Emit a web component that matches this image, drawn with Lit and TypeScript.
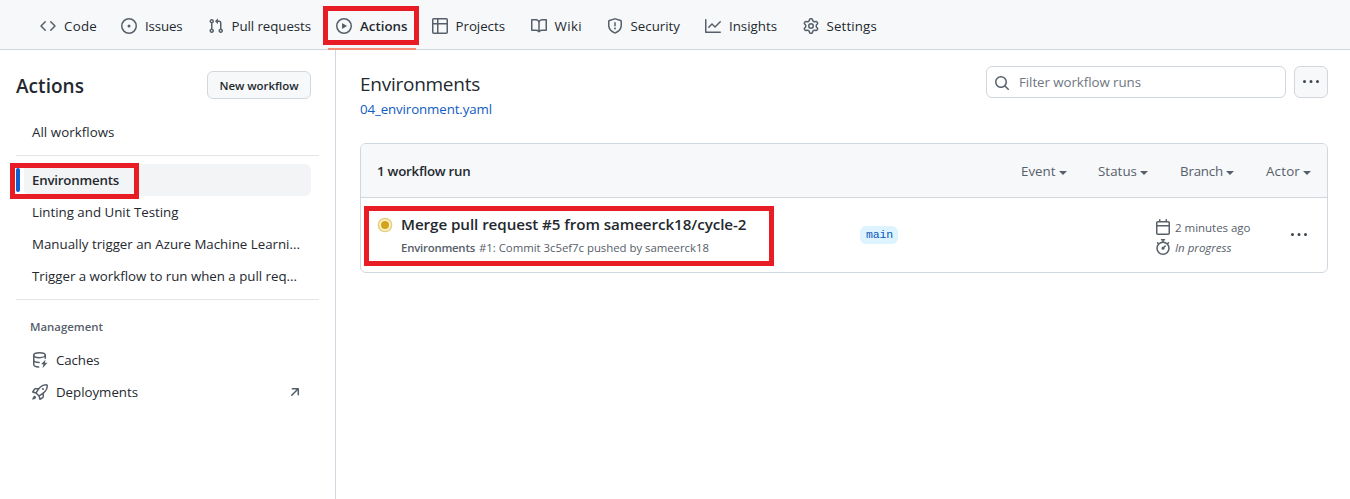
import { LitElement, html, css, svg } from "lit";
import { customElement, property } from "lit/decorators.js";

const FONT = css`"Open Sans", "Noto Sans", sans-serif`;

const ICONS: Record<string, string> = {
  code: "m11.28 3.22 4.25 4.25a.75.75 0 0 1 0 1.06l-4.25 4.25a.749.749 0 0 1-1.275-.326.749.749 0 0 1 .215-.734L13.94 8l-3.72-3.72a.749.749 0 0 1 .326-1.275.749.749 0 0 1 .734.215Zm-6.56 0a.751.751 0 0 1 1.042.018.751.751 0 0 1 .018 1.042L2.06 8l3.72 3.72a.749.749 0 0 1-.326 1.275.749.749 0 0 1-.734-.215L.47 8.53a.75.75 0 0 1 0-1.06Z",
  issue: "M8 9.5a1.5 1.5 0 1 0 0-3 1.5 1.5 0 0 0 0 3ZM8 0a8 8 0 1 1 0 16A8 8 0 0 1 8 0ZM1.5 8a6.5 6.5 0 1 0 13 0 6.5 6.5 0 0 0-13 0Z",
  pull: "M1.5 3.25a2.25 2.25 0 1 1 3 2.122v5.256a2.251 2.251 0 1 1-1.5 0V5.372A2.25 2.25 0 0 1 1.5 3.25Zm5.677-.177L9.573.677A.25.25 0 0 1 10 .854V2.5h1A2.5 2.5 0 0 1 13.5 5v5.628a2.251 2.251 0 1 1-1.5 0V5a1 1 0 0 0-1-1h-1v1.646a.25.25 0 0 1-.427.177L7.177 3.427a.25.25 0 0 1 0-.354ZM3.75 2.5a.75.75 0 1 0 0 1.5.75.75 0 0 0 0-1.5Zm0 9.5a.75.75 0 1 0 0 1.5.75.75 0 0 0 0-1.5Zm8.25.75a.75.75 0 1 0 1.5 0 .75.75 0 0 0-1.5 0Z",
  play: "M8 0a8 8 0 1 1 0 16A8 8 0 0 1 8 0ZM1.5 8a6.5 6.5 0 1 0 13 0 6.5 6.5 0 0 0-13 0Zm4.879-2.773 4.264 2.559a.25.25 0 0 1 0 .428l-4.264 2.559A.25.25 0 0 1 6 10.559V5.442a.25.25 0 0 1 .379-.215Z",
  table: "M0 1.75C0 .784.784 0 1.75 0h12.5C15.216 0 16 .784 16 1.75v12.5A1.75 1.75 0 0 1 14.25 16H1.75A1.75 1.75 0 0 1 0 14.25ZM6.5 6.5v8h7.75a.25.25 0 0 0 .25-.25V6.5Zm8-1.5V1.75a.25.25 0 0 0-.25-.25H6.5V5Zm-13 1.5v7.75c0 .138.112.25.25.25H5v-8ZM5 5V1.5H1.75a.25.25 0 0 0-.25.25V5Z",
  book: "M0 1.75A.75.75 0 0 1 .75 1h4.253c1.227 0 2.317.59 3 1.501A3.743 3.743 0 0 1 11.006 1h4.245a.75.75 0 0 1 .75.75v10.5a.75.75 0 0 1-.75.75h-4.507a2.25 2.25 0 0 0-1.591.659l-.622.621a.75.75 0 0 1-1.06 0l-.622-.621A2.25 2.25 0 0 0 5.258 13H.75a.75.75 0 0 1-.75-.75Zm7.251 10.324.004-5.073-.002-2.253A2.25 2.25 0 0 0 5.003 2.5H1.5v9h3.757a3.75 3.75 0 0 1 1.994.574ZM8.755 4.75l-.004 7.322a3.752 3.752 0 0 1 1.992-.572H14.5v-9h-3.495a2.25 2.25 0 0 0-2.25 2.25Z",
  shield: "M7.467.133a1.748 1.748 0 0 1 1.066 0l5.25 1.68A1.75 1.75 0 0 1 15 3.48V7c0 1.566-.32 3.182-1.303 4.682-.983 1.498-2.585 2.813-5.032 3.855a1.697 1.697 0 0 1-1.33 0c-2.447-1.042-4.049-2.357-5.032-3.855C1.32 10.182 1 8.566 1 7V3.48a1.75 1.75 0 0 1 1.217-1.667Zm.61 1.429a.25.25 0 0 0-.153 0l-5.25 1.68a.25.25 0 0 0-.174.238V7c0 1.358.275 2.666 1.057 3.86.784 1.194 2.121 2.34 4.366 3.297a.196.196 0 0 0 .154 0c2.245-.956 3.582-2.104 4.366-3.298C13.225 9.666 13.5 8.36 13.5 7V3.48a.251.251 0 0 0-.174-.237l-5.25-1.68ZM8.75 4.75v3a.75.75 0 0 1-1.5 0v-3a.75.75 0 0 1 1.5 0ZM9 10.5a1 1 0 1 1-2 0 1 1 0 0 1 2 0Z",
  graph: "M1.5 1.75V13.5h13.75a.75.75 0 0 1 0 1.5H.75a.75.75 0 0 1-.75-.75V1.75a.75.75 0 0 1 1.5 0Zm14.28 2.53-5.25 5.25a.75.75 0 0 1-1.06 0L7 7.06 4.28 9.78a.751.751 0 0 1-1.042-.018.751.751 0 0 1-.018-1.042l3.25-3.25a.75.75 0 0 1 1.06 0L10 7.94l4.72-4.72a.751.751 0 0 1 1.042.018.751.751 0 0 1 .018 1.042Z",
  gear: "M8 0a8.2 8.2 0 0 1 .701.031C9.444.095 9.99.645 10.16 1.29l.288 1.107c.018.066.079.158.212.224.231.114.454.243.668.386.123.082.233.09.299.071l1.103-.303c.644-.176 1.392.021 1.82.63.27.385.506.792.704 1.218.315.675.111 1.422-.364 1.891l-.814.806c-.049.048-.098.147-.088.294.016.257.016.515 0 .772-.01.147.038.246.088.294l.814.806c.475.469.679 1.216.364 1.891a7.977 7.977 0 0 1-.704 1.217c-.428.61-1.176.807-1.82.63l-1.102-.302c-.067-.019-.177-.011-.3.071a5.909 5.909 0 0 1-.668.386c-.133.066-.194.158-.211.224l-.29 1.106c-.168.646-.715 1.196-1.458 1.26a8.006 8.006 0 0 1-1.402 0c-.743-.064-1.289-.614-1.458-1.26l-.289-1.106c-.018-.066-.079-.158-.212-.224a5.738 5.738 0 0 1-.668-.386c-.123-.082-.233-.09-.299-.071l-1.103.303c-.644.176-1.392-.021-1.82-.63a8.12 8.12 0 0 1-.704-1.218c-.315-.675-.111-1.422.363-1.891l.815-.806c.05-.048.098-.147.088-.294a6.214 6.214 0 0 1 0-.772c.01-.147-.038-.246-.088-.294l-.815-.806C.635 6.045.431 5.298.746 4.623a7.92 7.92 0 0 1 .704-1.217c.428-.61 1.176-.807 1.82-.63l1.102.302c.067.019.177.011.3-.071.214-.143.437-.272.668-.386.133-.066.194-.158.211-.224l.29-1.106C6.009.645 6.556.095 7.299.03 7.53.01 7.764 0 8 0Zm-.571 1.525c-.036.003-.108.036-.137.146l-.289 1.105c-.147.561-.549.967-.998 1.189-.173.086-.34.183-.5.29-.417.278-.97.423-1.529.27l-1.103-.303c-.109-.03-.175.016-.195.045-.22.312-.412.644-.573.99-.014.031-.021.11.059.19l.815.806c.411.406.562.957.53 1.456a4.709 4.709 0 0 0 0 .582c.032.499-.119 1.05-.53 1.456l-.815.806c-.081.08-.073.159-.059.19.162.346.353.677.573.989.02.03.085.076.195.046l1.102-.303c.56-.153 1.113-.008 1.53.27.161.107.328.204.501.29.447.222.85.629.997 1.189l.289 1.105c.029.109.101.143.137.146a6.6 6.6 0 0 0 1.142 0c.036-.003.108-.036.137-.146l.289-1.105c.147-.561.549-.967.998-1.189.173-.086.34-.183.5-.29.417-.278.97-.423 1.529-.27l1.103.303c.109.029.175-.016.195-.045.22-.313.411-.644.573-.99.014-.031.021-.11-.059-.19l-.815-.806c-.411-.406-.562-.957-.53-1.456a4.709 4.709 0 0 0 0-.582c-.032-.499.119-1.05.53-1.456l.815-.806c.081-.08.073-.159.059-.19a6.464 6.464 0 0 0-.573-.989c-.02-.03-.085-.076-.195-.046l-1.102.303c-.56.153-1.113.008-1.53-.27a4.44 4.44 0 0 0-.501-.29c-.447-.222-.85-.629-.997-1.189l-.289-1.105c-.029-.11-.101-.143-.137-.146a6.6 6.6 0 0 0-1.142 0ZM11 8a3 3 0 1 1-6 0 3 3 0 0 1 6 0ZM9.5 8a1.5 1.5 0 1 0-3.001.001A1.5 1.5 0 0 0 9.5 8Z",
  search: "M10.68 11.74a6 6 0 0 1-7.922-8.982 6 6 0 0 1 8.982 7.922l3.04 3.04a.749.749 0 0 1-.326 1.275.749.749 0 0 1-.734-.215ZM11.5 7a4.499 4.499 0 1 0-8.997 0A4.499 4.499 0 0 0 11.5 7Z",
  kebab: "M8 9a1.5 1.5 0 1 0 0-3 1.5 1.5 0 0 0 0 3ZM1.5 9a1.5 1.5 0 1 0 0-3 1.5 1.5 0 0 0 0 3Zm13 0a1.5 1.5 0 1 0 0-3 1.5 1.5 0 0 0 0 3Z",
  calendar: "M4.75 0a.75.75 0 0 1 .75.75V2h5V.75a.75.75 0 0 1 1.5 0V2h1.25c.966 0 1.75.784 1.75 1.75v10.5A1.75 1.75 0 0 1 13.25 16H2.75A1.75 1.75 0 0 1 1 14.25V3.75C1 2.784 1.784 2 2.75 2H4V.75A.75.75 0 0 1 4.75 0ZM2.5 7.5v6.75c0 .138.112.25.25.25h10.5a.25.25 0 0 0 .25-.25V7.5Zm10.75-4H2.75a.25.25 0 0 0-.25.25V6h11V3.75a.25.25 0 0 0-.25-.25Z",
  stopwatch: "M5.75.75A.75.75 0 0 1 6.5 0h3a.75.75 0 0 1 0 1.5h-.75v1l-.001.041a6.724 6.724 0 0 1 3.464 1.435l.007-.006.75-.75a.749.749 0 0 1 1.275.326.749.749 0 0 1-.215.734l-.75.75-.006.007a6.75 6.75 0 1 1-10.548 0L2.72 5.03l-.75-.75a.751.751 0 0 1 .018-1.042.751.751 0 0 1 1.042-.018l.75.75.007.006A6.72 6.72 0 0 1 7.25 2.541V1.5H6.5a.75.75 0 0 1-.75-.75ZM8 14.5a5.25 5.25 0 1 0-.001-10.501A5.25 5.25 0 0 0 8 14.5Zm.389-6.7 1.33-1.33a.75.75 0 1 1 1.061 1.06L9.45 8.861A1.503 1.503 0 0 1 8 10.75a1.499 1.499 0 1 1 .389-2.95Z",
  rocket: "M14.064 0h.186C15.216 0 16 .784 16 1.75v.186a8.752 8.752 0 0 1-2.564 6.186l-.458.459c-.314.314-.641.616-.979.904v3.207c0 .608-.315 1.172-.833 1.49l-2.774 1.707a.749.749 0 0 1-1.11-.418l-.954-3.102a1.214 1.214 0 0 1-.145-.125L3.754 9.816a1.218 1.218 0 0 1-.124-.145L.528 8.717a.749.749 0 0 1-.418-1.11l1.71-2.774A1.748 1.748 0 0 1 3.31 4h3.204c.288-.338.59-.665.904-.979l.459-.458A8.749 8.749 0 0 1 14.064 0ZM8.938 3.623h-.002l-.458.458c-.76.76-1.437 1.598-2.02 2.5l-1.5 2.317 2.143 2.143 2.317-1.5c.902-.583 1.74-1.26 2.499-2.02l.459-.458a7.25 7.25 0 0 0 2.123-5.127V1.75a.25.25 0 0 0-.25-.25h-.186a7.249 7.249 0 0 0-5.125 2.123ZM3.56 14.56c-.732.732-2.334 1.045-3.005 1.148a.234.234 0 0 1-.201-.064.234.234 0 0 1-.064-.201c.103-.671.416-2.273 1.15-3.003a1.502 1.502 0 1 1 2.12 2.12Zm6.94-3.935c-.088.06-.177.118-.266.175l-2.35 1.521.548 1.783 1.949-1.2a.25.25 0 0 0 .119-.213ZM3.678 8.116 5.2 5.766c.058-.09.117-.178.176-.266H3.309a.25.25 0 0 0-.213.119l-1.2 1.95ZM12 5a1 1 0 1 1-2 0 1 1 0 0 1 2 0Z",
  arrow: "M4.53 4.75A.75.75 0 0 1 5.28 4h6.01a.75.75 0 0 1 .75.75v6.01a.75.75 0 0 1-1.5 0v-4.2l-5.26 5.261a.749.749 0 0 1-1.275-.326.749.749 0 0 1 .215-.734L9.48 5.5h-4.2a.75.75 0 0 1-.75-.75Z",
};

@customElement("ui-icon")
class UiIcon extends LitElement {
  @property() name = "";
  static styles = css`
    :host { display: block; flex: none; width: 16px; height: 16px; }
    svg { display: block; width: 16px; height: 16px; fill: currentColor; overflow: visible; }
    .line { fill: none; stroke: currentColor; stroke-width: 1.5; stroke-linecap: round; }
  `;
  render() {
    const body =
      this.name === "cache"
        ? svg`<g class="line"><ellipse cx="7.5" cy="3.2" rx="5.75" ry="2.45"/><path d="M1.75 3.4v9.1c0 1.3 2 2.3 4.9 2.6M1.75 8c0 1.3 2.4 2.4 5.4 2.4M13.25 3.4v2.9"/></g><path d="M13.6 7.4 9 12.3h2.4l-.9 3.9 5-5.4h-2.7Z"/>`
        : svg`<path fill-rule="evenodd" d=${ICONS[this.name] ?? ""}/>`;
    return html`<svg viewBox="0 0 16 16" aria-hidden="true">${body}</svg>`;
  }
}

/* A single line of text whose tracking is adjusted so that it spans a given width. */
@customElement("ui-text")
class UiText extends LitElement {
  @property({ type: Number }) span = 0;
  @property() text = "";
  static styles = css`
    :host { display: block; flex: none; white-space: pre; }
    .t { display: inline-block; }
  `;
  firstUpdated() {
    const el = this.renderRoot.querySelector<HTMLElement>(".t")!;
    const fit = () => {
      el.style.letterSpacing = "0.001px";
      const natural = el.getBoundingClientRect().width;
      el.style.letterSpacing = `${((this.span - natural) / this.text.length).toFixed(3)}px`;
    };
    fit();
    document.fonts.ready.then(fit);
  }
  render() {
    return html`<span class="t">${this.text}</span>`;
  }
}

const t = (text: string, span: number) => html`<ui-text .text=${text} .span=${span}></ui-text>`;
const icon = (name: string) => html`<ui-icon name=${name}></ui-icon>`;

@customElement("repo-nav")
class RepoNav extends LitElement {
  /* icon, label, label width, full item width */
  tabs: [string, string, number, number][] = [
    ["code", "Code", 33, 81],
    ["issue", "Issues", 37.5, 86.5],
    ["pull", "Pull requests", 79.5, 128.5],
    ["play", "Actions", 47.5, 95.5],
    ["table", "Projects", 49.5, 99],
    ["book", "Wiki", 27.5, 76],
    ["shield", "Security", 49.5, 98.5],
    ["graph", "Insights", 48, 97.5],
    ["gear", "Settings", 50.5, 80],
  ];
  static styles = css`
    :host { display: block; }
    nav { display: flex; box-sizing: border-box; height: 50px; padding-left: 40px; background: #f6f8fa; border-bottom: 1px solid #d0d7de; font-size: 13.3px; color: #24292f; }
    .tab { position: relative; box-sizing: border-box; display: flex; align-items: center; gap: 8px; height: 49px; padding-top: 3px; line-height: 20px; }
    ui-icon { color: #57606a; }
    .active { font-weight: 600; }
    .active::after { content: ""; position: absolute; left: -8px; top: 48px; width: 88px; height: 2px; background: #f58d76; }
    .active::before { content: ""; position: absolute; box-sizing: border-box; left: -13px; top: 6px; width: 96px; height: 39px; border: 5px solid #e81c24; }
  `;
  render() {
    return html`<nav>
      ${this.tabs.map(
        ([i, label, w, full]) => html`<div class="tab ${label === "Actions" ? "active" : ""}" style="width:${full}px">${icon(i)}${t(label, w)}</div>`
      )}
    </nav>`;
  }
}

@customElement("side-bar")
class SideBar extends LitElement {
  workflows: [string, number][] = [
    ["Environments", 87],
    ["Linting and Unit Testing", 146.5],
    ["Manually trigger an Azure Machine Learni...", 268],
    ["Trigger a workflow to run when a pull req...", 265],
  ];
  static styles = css`
    :host { display: block; box-sizing: border-box; width: 336px; border-right: 1px solid #d0d7de; padding: 21px 16px 0; font-size: 13.3px; line-height: 20px; color: #24292f; }
    .top { display: flex; justify-content: space-between; align-items: center; height: 28px; padding-right: 8px; }
    h2 { margin: 0; padding-top: 2px; font-size: 19px; font-weight: 600; line-height: 28px; }
    .new { box-sizing: border-box; height: 28px; width: 104px; display: flex; justify-content: center; align-items: center; border: 1px solid #d3d7dc; border-radius: 6px; background: #f6f8fa; font-size: 11.5px; font-weight: 600; padding-top: 1px; }
    .item { position: relative; display: flex; align-items: center; gap: 8px; height: 32px; margin: 0 8px; padding: 0 8px; border-radius: 6px; }
    .all { margin-top: 17px; }
    .rule { width: 303px; height: 1px; background: #e2e5e9; }
    .r1 { margin: 7px 0 8px; }
    .r2 { margin: 7px 0 17px; }
    .current { font-weight: 600; background: #f3f4f6; }
    .current::before { content: ""; position: absolute; left: -8px; top: 4px; width: 4px; height: 24px; border-radius: 4px; background: #0f5fd0; }
    .current::after { content: ""; position: absolute; box-sizing: border-box; left: -14px; top: -1px; width: 129px; height: 36px; border: 5px solid #e81c24; }
    .group { margin: 0 14px 7px; font-size: 11.4px; font-weight: 600; color: #57606a; }
    ui-icon { color: #57606a; }
    .out { margin-left: auto; }
  `;
  render() {
    return html`
      <div class="top"><h2>${t("Actions", 68)}</h2><div class="new">${t("New workflow", 79)}</div></div>
      <div class="item all">${t("All workflows", 82.5)}</div>
      <div class="rule r1"></div>
      ${this.workflows.map(([n, w], i) => html`<div class="item ${i === 0 ? "current" : ""}">${t(n, w)}</div>`)}
      <div class="rule r2"></div>
      <div class="group">${t("Management", 73)}</div>
      <div class="item">${icon("cache")}${t("Caches", 43.5)}</div>
      <div class="item">${icon("rocket")}${t("Deployments", 82)}<ui-icon class="out" name="arrow"></ui-icon></div>
    `;
  }
}

@customElement("run-list")
class RunList extends LitElement {
  filters: [string, number, number][] = [
    ["Event", 34.5, 77],
    ["Status", 39, 82],
    ["Branch", 43, 86],
    ["Actor", 34, 45],
  ];
  static styles = css`
    :host { display: block; flex: 1; padding: 16px 22px 0 24px; font-size: 13.3px; line-height: 20px; color: #24292f; }
    .head { display: flex; align-items: flex-start; height: 77px; }
    .title { flex: 1; }
    h1 { margin: 0; padding-top: 3px; font-size: 19px; font-weight: 400; line-height: 30px; }
    .file { color: #0f5cc4; }
    .search { box-sizing: border-box; width: 300px; height: 32px; border: 1px solid #d0d7de; border-radius: 6px; display: flex; align-items: center; gap: 9px; padding-left: 7px; color: #6e7781; }
    .search ui-icon { color: #57606a; padding-top: 1px; }
    .more { box-sizing: border-box; width: 34px; height: 32px; margin-left: 8px; border: 1px solid #d3d7dc; border-radius: 6px; background: #f6f8fa; display: flex; align-items: center; justify-content: center; }
    .more ui-icon, .kebab { color: #3f464e; }
    .box { box-sizing: border-box; height: 130px; border: 1px solid #d0d7de; border-radius: 6px; overflow: hidden; }
    .bar { display: flex; align-items: center; height: 53px; padding: 0 16px; background: #f6f8fa; border-bottom: 1px solid #d0d7de; }
    .count { flex: 1; font-weight: 600; }
    .filter { display: flex; align-items: center; gap: 3px; color: #57606a; }
    .caret { width: 0; height: 0; margin-top: 4px; border: 4px solid transparent; border-top-color: currentColor; border-bottom: 0; }
    .row { position: relative; display: flex; height: 74px; }
    .mark { position: absolute; box-sizing: border-box; left: 3px; top: 8px; width: 410px; height: 60px; border: 5px solid #e81c24; }
    .state { width: 16px; height: 16px; margin: 19px 8px 0 16px; }
    .info { width: 459px; padding-top: 14px; }
    .name { font-size: 15.2px; font-weight: 600; line-height: 24px; }
    .sub { display: flex; gap: 4px; font-size: 11.4px; line-height: 18px; padding-top: 3px; color: #57606a; }
    .sub .wf { font-weight: 600; }
    .branch { width: 295px; padding-top: 28px; }
    .pill { display: flex; box-sizing: border-box; height: 18px; width: 38px; padding-left: 6px; border-radius: 6px; background: #ddf4ff; color: #0b57b8; font: 11.5px/18px "Liberation Mono", "DejaVu Sans Mono", monospace; }
    .times { width: 136px; padding-top: 19px; font-size: 11.5px; color: #57606a; }
    .time { display: flex; align-items: center; gap: 4px; height: 20px; }
    .time ui-text { padding-top: 1px; }
    .it { font-style: italic; }
    .kebab { padding-top: 29px; }
  `;
  render() {
    return html`
      <div class="head">
        <div class="title"><h1>${t("Environments", 120)}</h1><div class="file">${t("04_environment.yaml", 132)}</div></div>
        <div class="search">${icon("search")}${t("Filter workflow runs", 122)}</div>
        <div class="more">${icon("kebab")}</div>
      </div>
      <div class="box">
        <div class="bar">
          <div class="count">${t("1 workflow run", 93.5)}</div>
          ${this.filters.map(([n, w, full]) => html`<div class="filter" style="width:${full}px">${t(n, w)}<i class="caret"></i></div>`)}
        </div>
        <div class="row">
          <svg class="state" viewBox="0 0 16 16"><circle cx="8" cy="8" r="6.6" fill="#fbf3d0" stroke="#e6cf7c" stroke-width="1.5"/><circle cx="8" cy="8" r="4" fill="#d4a418"/></svg>
          <div class="info">
            <div class="name">${t("Merge pull request #5 from sameerck18/cycle-2", 345.5)}</div>
            <div class="sub"><span class="wf">${t("Environments", 74)}</span>${t("#1: Commit 3c5ef7c pushed by sameerck18", 230)}</div>
          </div>
          <div class="branch"><span class="pill">${t("main", 27)}</span></div>
          <div class="times">
            <div class="time">${icon("calendar")}${t("2 minutes ago", 75.5)}</div>
            <div class="time it">${icon("stopwatch")}${t("In progress", 56.5)}</div>
          </div>
          <ui-icon class="kebab" name="kebab"></ui-icon>
          <div class="mark"></div>
        </div>
      </div>
    `;
  }
}

@customElement("app-root")
class AppRoot extends LitElement {
  static styles = css`
    :host { display: flex; flex-direction: column; width: 1350px; height: 499px; overflow: hidden; background: #fff; font-family: ${FONT}; }
    .body { flex: 1; display: flex; }
    side-bar { flex: none; }
  `;
  render() {
    return html`<repo-nav></repo-nav><div class="body"><side-bar></side-bar><run-list></run-list></div>`;
  }
}
